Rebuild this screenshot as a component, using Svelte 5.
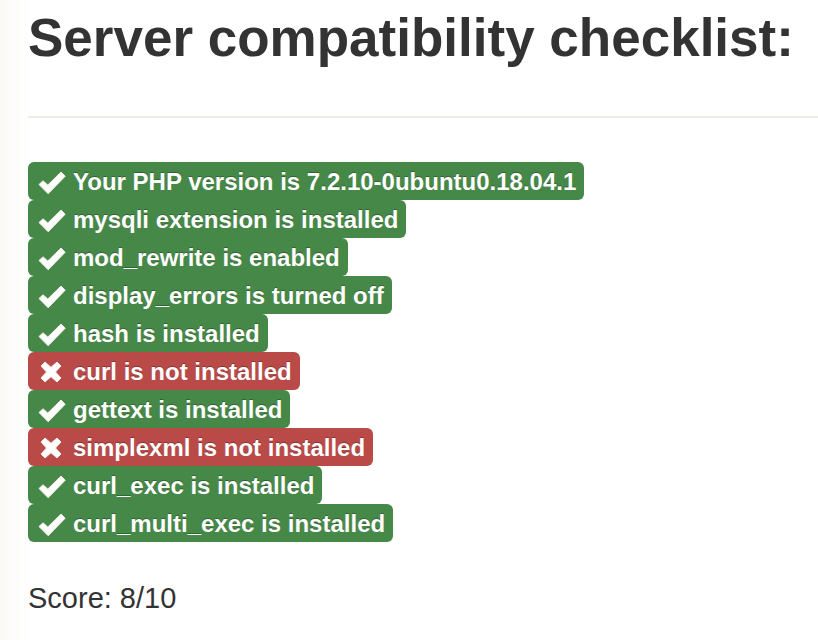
<script>
  const checks = [
    { ok: true, text: 'Your PHP version is 7.2.10-0ubuntu0.18.04.1' },
    { ok: true, text: 'mysqli extension is installed' },
    { ok: true, text: 'mod_rewrite is enabled' },
    { ok: true, text: 'display_errors is turned off' },
    { ok: true, text: 'hash is installed' },
    { ok: false, text: 'curl is not installed' },
    { ok: true, text: 'gettext is installed' },
    { ok: false, text: 'simplexml is not installed' },
    { ok: true, text: 'curl_exec is installed' },
    { ok: true, text: 'curl_multi_exec is installed' }
  ];
  const score = checks.filter((c) => c.ok).length;
</script>

<main>
  <h1>Server compatibility checklist:</h1>
  <hr />
  <ul>
    {#each checks as check}
      <li class:failed={!check.ok}>
        <svg viewBox="0 0 30 26" aria-hidden="true">
          {#if check.ok}
            <path d="M3 15.5 7 11.8 11.8 16 25 3 29.2 7.2 12.2 24.8Z" />
          {:else}
            <path d="M5 7 9 3 15 8.3 21 3 25 7 19.5 13 25 19 21 23 15 17.7 9 23 5 19 10.5 13Z" />
          {/if}
        </svg>
        <span>{check.text}</span>
      </li>
    {/each}
  </ul>
  <p>Score: {score}/{checks.length}</p>
</main>

<style>
  :global(body) {
    margin: 0;
    background: #fff;
  }
  main {
    padding: 8px 0 24px 28px;
    background: linear-gradient(to right, #fbfaf6, #fff 32px);
    font-family: "Liberation Sans", Arial, sans-serif;
    color: #333;
  }
  h1 {
    margin: 0;
    font-size: 53px;
    line-height: 60px;
    font-weight: 700;
    white-space: nowrap;
  }
  hr {
    margin: 48px 0 44px;
    border: 0;
    border-top: 2px solid #f0ede4;
  }
  ul {
    display: flex;
    flex-direction: column;
    align-items: flex-start;
    margin: 0;
    padding: 0;
    list-style: none;
  }
  li {
    display: flex;
    align-items: center;
    gap: 7px;
    box-sizing: border-box;
    height: 38px;
    padding: 2px 8px 0;
    border-radius: 6px;
    background: #468847;
    color: #fff;
    font-size: 24px;
    line-height: 28px;
    font-weight: 700;
    white-space: nowrap;
    text-shadow: 0 -1px 0 rgba(0, 0, 0, 0.3);
  }
  li.failed {
    background: #b94a48;
  }
  svg {
    width: 30px;
    height: 26px;
    fill: #fff;
    stroke: #f3eee4;
    stroke-width: 1;
    stroke-linejoin: round;
  }
  p {
    margin: 36px 0 0;
    font-size: 29px;
    line-height: 40px;
  }
</style>
